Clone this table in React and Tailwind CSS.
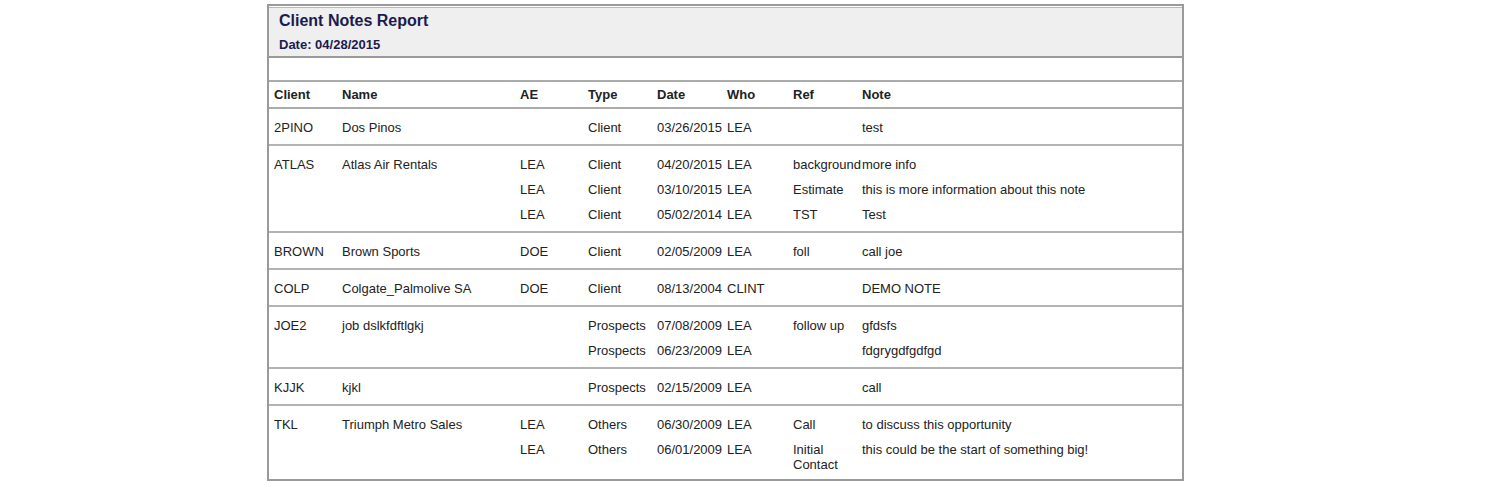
import React from "react";

const groups = [
  {
    client: "2PINO",
    name: "Dos Pinos",
    rows: [{ ae: "", type: "Client", date: "03/26/2015", who: "LEA", ref: "", note: "test" }],
  },
  {
    client: "ATLAS",
    name: "Atlas Air Rentals",
    rows: [
      { ae: "LEA", type: "Client", date: "04/20/2015", who: "LEA", ref: "background", note: "more info" },
      { ae: "LEA", type: "Client", date: "03/10/2015", who: "LEA", ref: "Estimate", note: "this is more information about this note" },
      { ae: "LEA", type: "Client", date: "05/02/2014", who: "LEA", ref: "TST", note: "Test" },
    ],
  },
  {
    client: "BROWN",
    name: "Brown Sports",
    rows: [{ ae: "DOE", type: "Client", date: "02/05/2009", who: "LEA", ref: "foll", note: "call joe" }],
  },
  {
    client: "COLP",
    name: "Colgate_Palmolive SA",
    rows: [{ ae: "DOE", type: "Client", date: "08/13/2004", who: "CLINT", ref: "", note: "DEMO NOTE" }],
  },
  {
    client: "JOE2",
    name: "job dslkfdftlgkj",
    rows: [
      { ae: "", type: "Prospects", date: "07/08/2009", who: "LEA", ref: "follow up", note: "gfdsfs" },
      { ae: "", type: "Prospects", date: "06/23/2009", who: "LEA", ref: "", note: "fdgrygdfgdfgd" },
    ],
  },
  {
    client: "KJJK",
    name: "kjkl",
    rows: [{ ae: "", type: "Prospects", date: "02/15/2009", who: "LEA", ref: "", note: "call" }],
  },
  {
    client: "TKL",
    name: "Triumph Metro Sales",
    rows: [
      { ae: "LEA", type: "Others", date: "06/30/2009", who: "LEA", ref: "Call", note: "to discuss this opportunity" },
      { ae: "LEA", type: "Others", date: "06/01/2009", who: "LEA", ref: "Initial Contact", note: "this could be the start of something big!" },
    ],
  },
];

const cols = "grid grid-cols-[68px_178px_68px_69px_70px_66px_69px_1fr]";

const App = () => {
  return (
    <div className="w-[1506px] h-[502px] bg-white pt-[4px] pl-[267px] font-['Liberation_Sans',Arial,sans-serif] text-[13px] leading-[15px] text-[#222]">
      <div className="w-[917px] border-2 border-[#9a9a9a]">
        {/* report header */}
        <div className="mt-[1px] bg-[#efefef] border-t border-[#b8b8b8] border-b-2 border-b-[#9a9a9a] pl-[10px] pt-[4px] pb-[4px]">
          <h1 className="text-[16px] leading-[18px] font-bold text-[#1b1b4f]">Client Notes Report</h1>
          <p className="mt-[7px] font-bold text-[#1b1b4f]">Date: 04/28/2015</p>
        </div>

        <div className="h-[22px]" />

        {/* column headings */}
        <div className={`${cols} pl-[5px] border-t-2 border-b-2 border-[#ababab] font-bold py-[5px]`}>
          <div>Client</div>
          <div>Name</div>
          <div>AE</div>
          <div>Type</div>
          <div>Date</div>
          <div>Who</div>
          <div>Ref</div>
          <div>Note</div>
        </div>

        {groups.map((g, gi) => (
          <div
            key={g.client}
            className={
              gi === groups.length - 1
                ? "pl-[5px] pt-[6px] pb-[2px]"
                : "pl-[5px] pt-[6px] pb-[4px] border-b-2 border-[#b4b4b4]"
            }
          >
            {g.rows.map((r, ri) => (
              <div key={ri} className={`${cols} py-[5px]`}>
                <div>{ri === 0 ? g.client : ""}</div>
                <div>{ri === 0 ? g.name : ""}</div>
                <div>{r.ae}</div>
                <div>{r.type}</div>
                <div>{r.date}</div>
                <div>{r.who}</div>
                <div className="pr-[2px]">{r.ref}</div>
                <div>{r.note}</div>
              </div>
            ))}
          </div>
        ))}
      </div>
    </div>
  );
};

export default App;
